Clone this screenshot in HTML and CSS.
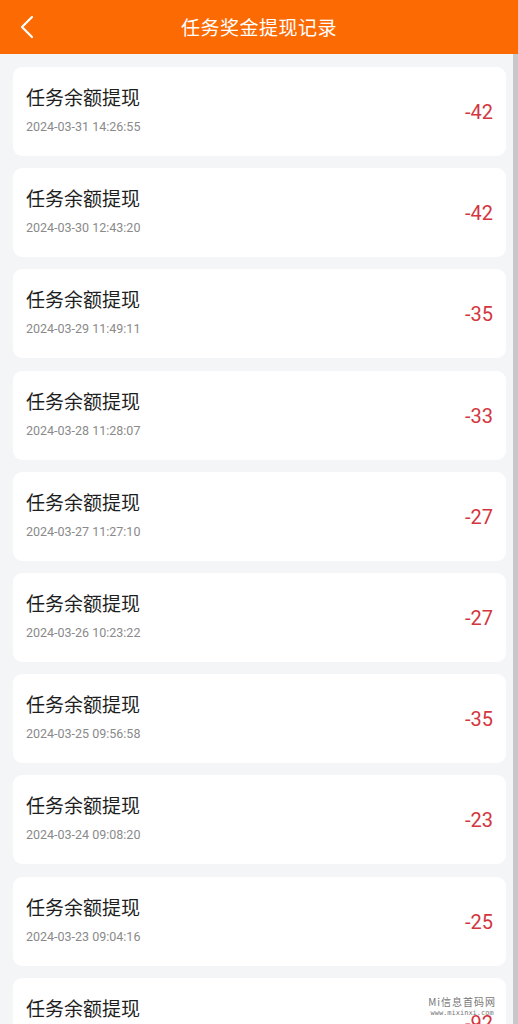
FILE: index.html
```html
<!DOCTYPE html>
<html lang="zh-CN">
<head>
  <meta charset="UTF-8" />
  <meta name="viewport" content="width=device-width, initial-scale=1.0" />
  <title>任务奖金提现记录</title>
  <link rel="stylesheet" href="styles.css">
</head>
<body>
  <header class="topbar">
    <span class="back">
      <svg width="14" height="24" viewBox="0 0 14 24"><path d="M12 2 L2 12 L12 22" fill="none" stroke="#fff" stroke-width="2.2" stroke-linecap="round" stroke-linejoin="round"/></svg>
    </span>
    <h1>任务奖金提现记录</h1>
  </header>

  <main class="list">
    <div class="card"><div class="info"><div class="title">任务余额提现</div><div class="time">2024-03-31 14:26:55</div></div><div class="amount">-42</div></div>
    <div class="card"><div class="info"><div class="title">任务余额提现</div><div class="time">2024-03-30 12:43:20</div></div><div class="amount">-42</div></div>
    <div class="card"><div class="info"><div class="title">任务余额提现</div><div class="time">2024-03-29 11:49:11</div></div><div class="amount">-35</div></div>
    <div class="card"><div class="info"><div class="title">任务余额提现</div><div class="time">2024-03-28 11:28:07</div></div><div class="amount">-33</div></div>
    <div class="card"><div class="info"><div class="title">任务余额提现</div><div class="time">2024-03-27 11:27:10</div></div><div class="amount">-27</div></div>
    <div class="card"><div class="info"><div class="title">任务余额提现</div><div class="time">2024-03-26 10:23:22</div></div><div class="amount">-27</div></div>
    <div class="card"><div class="info"><div class="title">任务余额提现</div><div class="time">2024-03-25 09:56:58</div></div><div class="amount">-35</div></div>
    <div class="card"><div class="info"><div class="title">任务余额提现</div><div class="time">2024-03-24 09:08:20</div></div><div class="amount">-23</div></div>
    <div class="card"><div class="info"><div class="title">任务余额提现</div><div class="time">2024-03-23 09:04:16</div></div><div class="amount">-25</div></div>
    <div class="card"><div class="info"><div class="title">任务余额提现</div><div class="time">2024-03-22 08:51:40</div></div><div class="amount">-92</div></div>
  </main>

  <div class="scrollbar"></div>

  <div class="watermark">
    <div class="wm-name">Mi信息首码网</div>
    <div class="wm-url">www.mixinxi.com</div>
  </div>
</body>
</html>
```

FILE: styles.css
```css
html, body {
  height: 1024px;
  overflow: hidden;
}

body {
  font-family: Roboto, "Noto Sans CJK SC", sans-serif;
  background-color: #f4f5f7;
  margin: 0;
  position: relative;
}

.topbar {
  height: 54px;
  background-color: #fc6a04;
  display: flex;
  align-items: center;
  justify-content: center;
  position: relative;
}

.back {
  position: absolute;
  left: 20px;
  top: 15px;
}

.topbar h1 {
  margin: -1px 0 0;
  color: #fff;
  font-size: 19px;
  font-weight: 400;
  letter-spacing: 0.5px;
}

.list {
  padding: 13px 12px 0 13px;
  display: flex;
  flex-direction: column;
  gap: 12.2px;
}

.card {
  background: #fff;
  border-radius: 9px;
  height: 89px;
  display: flex;
  align-items: center;
  justify-content: space-between;
  padding: 0 13px 0 13px;
  flex-shrink: 0;
}

.info {
  display: flex;
  flex-direction: column;
  margin-top: -3px;
}

.title {
  font-size: 19px;
  color: #1e1e1e;
  line-height: 26px;
}

.time {
  font-size: 12.5px;
  color: #8a8a8a;
  margin-top: 7px;
}

.amount {
  font-size: 20px;
  color: #d3363e;
  margin-top: 1px;
}

.scrollbar {
  position: absolute;
  right: 0;
  top: 54px;
  width: 5px;
  height: 970px;
  background: #c8c8ca;
}

.watermark {
  position: absolute;
  right: 22px;
  top: 994px;
  text-align: center;
  font-family: "DejaVu Sans Mono", monospace;
  color: #777;
}

.wm-name {
  font-size: 10px;
  font-family: "Noto Sans CJK SC", monospace;
  letter-spacing: 1px;
}

.wm-url {
  font-size: 7px;
}
```
